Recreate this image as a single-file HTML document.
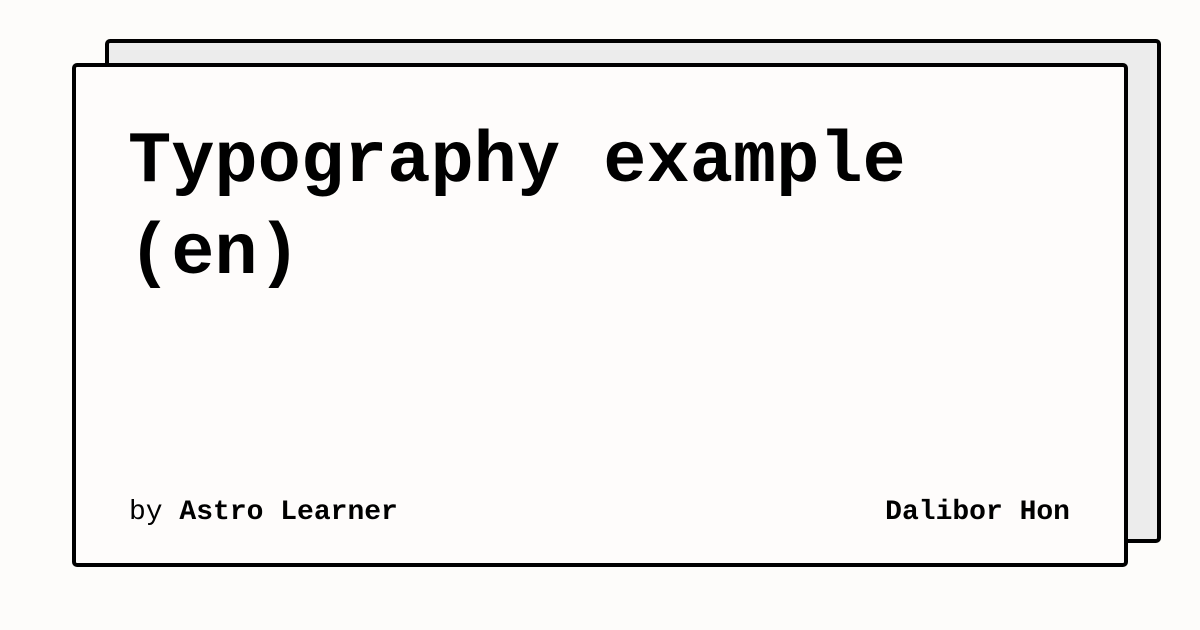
<!DOCTYPE html>
<html><head><style>
html,body{margin:0;padding:0;width:1200px;height:630px;background:#fdfcfa;overflow:hidden}
.back{position:absolute;left:105px;top:39px;width:1048px;height:496px;background:#ececec;border:4px solid #000;border-radius:5px}
.front{position:absolute;left:72px;top:63px;width:1048px;height:496px;background:#fefcfb;border:4px solid #000;border-radius:5px}
h1{position:absolute;left:52px;top:49px;margin:0;font:bold 72px/92px "Liberation Mono",monospace;color:#000;width:900px}
.f{position:absolute;top:428px;font:28px/36px "Liberation Mono",monospace;color:#000}
b{font-weight:bold}
</style></head><body>
<div class="back"></div>
<div class="front">
<h1>Typography example (en)</h1>
<div class="f" style="left:53px">by <b>Astro Learner</b></div>
<div class="f" style="right:54px"><b>Dalibor Hon</b></div>
</div>
</body></html>
